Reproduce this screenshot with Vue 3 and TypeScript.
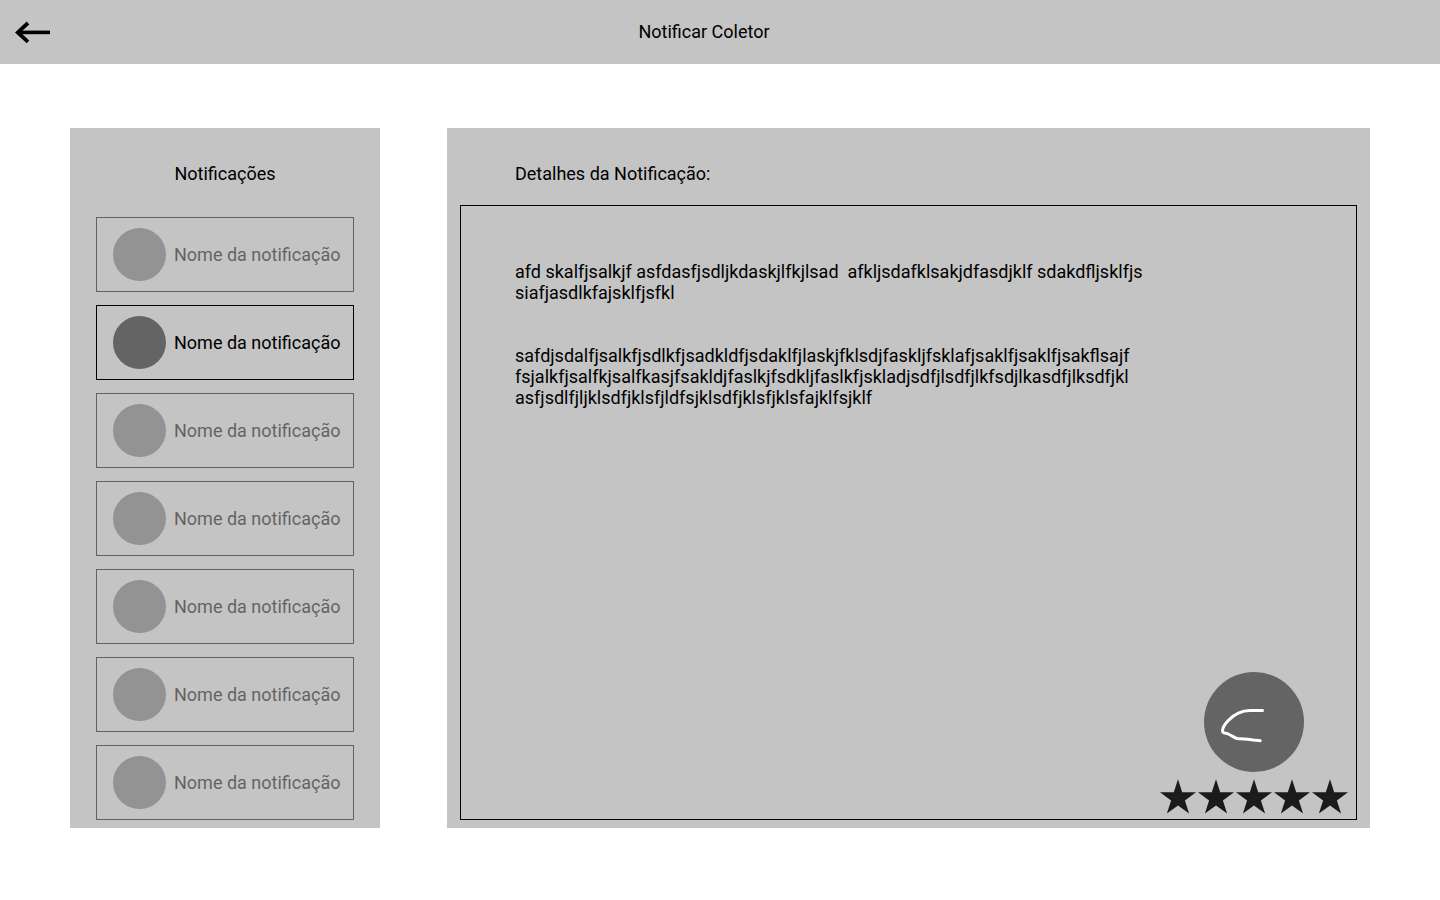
<script setup lang="ts">
import { ref } from 'vue'

interface NotificationItem {
  id: number
  name: string
}

const notifications: NotificationItem[] = Array.from({ length: 7 }, (_, i) => ({
  id: i + 1,
  name: 'Nome da notificação',
}))

const selectedId = ref<number>(2)

const paragraphs: string[] = [
  'afd skalfjsalkjf asfdasfjsdljkdaskjlfkjlsad  afkljsdafklsakjdfasdjklf sdakdfljsklfjs\nsiafjasdlkfajsklfjsfkl',
  'safdjsdalfjsalkfjsdlkfjsadkldfjsdaklfjlaskjfklsdjfaskljfsklafjsaklfjsaklfjsakflsajf\nfsjalkfjsalfkjsalfkasjfsakldjfaslkjfsdkljfaslkfjskladjsdfjlsdfjlkfsdjlkasdfjlksdfjkl\nasfjsdlfjljklsdfjklsfjldfsjklsdfjklsfjklsfajklfsjklf',
]

const rating = 5
</script>

<template>
  <div class="page">
    <header class="topbar">
      <button class="back" type="button" aria-label="Voltar">
        <svg width="36" height="24" viewBox="0 0 36 24" aria-hidden="true">
          <path d="M36 12.4H5" fill="none" stroke="#000" stroke-width="3.6" />
          <path d="M14 3L3.8 12.4L14 21.8" fill="none" stroke="#000" stroke-width="3.8" />
        </svg>
      </button>
      <h1 class="title">Notificar Coletor</h1>
    </header>

    <main class="content">
      <nav class="sidebar" aria-labelledby="list-title">
        <h2 id="list-title" class="sidebar-title">Notificações</h2>
        <ul class="list">
          <li v-for="item in notifications" :key="item.id">
            <button
              type="button"
              class="item"
              :class="{ selected: item.id === selectedId }"
              :aria-pressed="item.id === selectedId"
              @click="selectedId = item.id"
            >
              <span class="dot"></span>
              <span>{{ item.name }}</span>
            </button>
          </li>
        </ul>
      </nav>

      <section class="details" aria-labelledby="details-title">
        <h2 id="details-title" class="details-title">Detalhes da Notificação:</h2>
        <article class="box">
          <div class="text">
            <p v-for="(text, i) in paragraphs" :key="i">{{ text }}</p>
          </div>
          <div class="author">
            <svg class="avatar" width="100" height="100" viewBox="0 0 100 100" aria-hidden="true">
              <circle cx="50" cy="50" r="50" fill="#646464" />
              <path
                d="M58.5 38.6H46C37 38.6 30 42.5 24 48.8C20.5 52.5 18.5 56 18.5 59C18.7 61.8 21.5 60.8 24.2 62C28 63.8 31 66.3 34 66.8C40 66.6 44 67.4 49 68C52 68.3 54 68.5 56.3 68.7"
                fill="none"
                stroke="#fff"
                stroke-width="3"
                stroke-linecap="round"
                stroke-linejoin="round"
              />
            </svg>
            <div class="stars" role="img" :aria-label="`${rating} de 5 estrelas`">
              <svg v-for="n in rating" :key="n" width="38" height="35" viewBox="0 0 38 35">
                <path
                  d="M19 0.2L23.2 13.3H37L25.9 21.4L30.1 34.5L19 26.4L7.9 34.5L12.1 21.4L1 13.3H14.8Z"
                  fill="#1c1a1b"
                />
              </svg>
            </div>
          </div>
        </article>
      </section>
    </main>
  </div>
</template>

<style>
body {
  margin: 0;
  background: #fff;
}
</style>

<style scoped>
.page {
  font-family: Roboto, 'Liberation Sans', sans-serif;
  font-size: 18px;
  line-height: 21px;
  color: #000;
}

h1,
h2,
p,
ul {
  margin: 0;
  padding: 0;
  font-size: inherit;
  font-weight: 400;
}

button {
  margin: 0;
  background: none;
  font: inherit;
  color: inherit;
  cursor: pointer;
}

.topbar {
  display: flex;
  align-items: center;
  min-height: 64px;
  padding: 0 82px 0 14px;
  box-sizing: border-box;
  background: #c4c4c4;
}

.back {
  display: flex;
  padding: 0;
  border: 0;
}

.title {
  flex: 1;
  padding-bottom: 1px;
  text-align: center;
}

.content {
  display: grid;
  grid-template-columns: 310px minmax(0, 1fr);
  gap: 67px;
  padding: 64px 70px;
}

.sidebar {
  padding: 35px 26px 8px;
  background: #c4c4c4;
}

.sidebar-title {
  margin-bottom: 33px;
  text-align: center;
}

.list {
  display: flex;
  flex-direction: column;
  gap: 13px;
  list-style: none;
}

.item {
  display: flex;
  align-items: center;
  gap: 8px;
  width: 100%;
  padding: 10px 0 10px 16px;
  border: 1px solid #000;
  text-align: left;
  opacity: 0.5;
}

.item.selected {
  opacity: 1;
}

.dot {
  flex: none;
  width: 53px;
  height: 53px;
  border-radius: 50%;
  background: #646464;
}

.details {
  display: flex;
  flex-direction: column;
  padding: 35px 13px 8px;
  background: #c4c4c4;
}

.details-title {
  margin-bottom: 21px;
  padding-left: 55px;
}

.box {
  display: flex;
  flex: 1;
  flex-direction: column;
  justify-content: space-between;
  padding: 55px 7px 5px 54px;
  border: 1px solid #000;
}

.text {
  display: flex;
  flex-direction: column;
  gap: 42px;
  white-space: pre-wrap;
  overflow-wrap: anywhere;
}

.author {
  display: flex;
  flex-direction: column;
  align-items: center;
  align-self: flex-end;
  gap: 7px;
}

.stars {
  display: flex;
}
</style>
